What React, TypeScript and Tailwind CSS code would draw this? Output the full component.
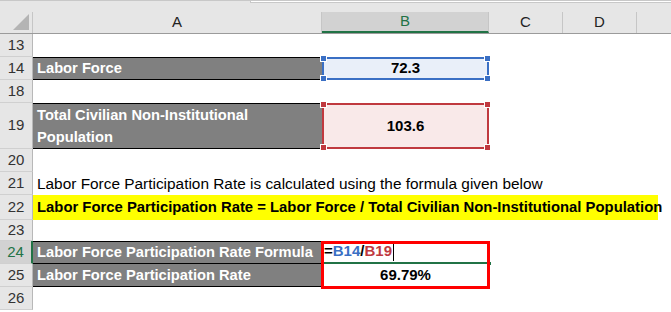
import React from "react";

const rowLabel =
  "w-[33px] shrink-0 flex items-center justify-center bg-[#e6e6e6] border-r border-b border-r-[#b8b8b8] border-b-[#d0d0d0] text-[#333] text-[15px]";

const greyCell =
  "w-[289px] shrink-0 bg-[#808080] text-white font-bold text-[14.7px] pl-[4px] border-y border-black flex items-center";

const Handles = ({ color }: { color: string }) => (
  <>
    <span className={`absolute -left-[4px] -top-[4px] w-[7px] h-[7px] ${color} border border-white`} />
    <span className={`absolute -right-[4px] -top-[4px] w-[7px] h-[7px] ${color} border border-white`} />
    <span className={`absolute -left-[4px] -bottom-[4px] w-[7px] h-[7px] ${color} border border-white`} />
    <span className={`absolute -right-[4px] -bottom-[4px] w-[7px] h-[7px] ${color} border border-white`} />
  </>
);

const Row = ({
  n,
  h,
  active,
  children,
}: {
  n: number;
  h: string;
  active?: boolean;
  children?: React.ReactNode;
}) => (
  <div className={`flex ${h}`}>
    <div
      className={
        active
          ? "w-[33px] shrink-0 flex items-center justify-center bg-[#d2d2d2] border-r-2 border-b border-r-[#217346] border-b-[#d0d0d0] text-[#217346] text-[15px]"
          : rowLabel
      }
    >
      {n}
    </div>
    <div className="flex-1 flex min-w-0">{children}</div>
  </div>
);

export default function App() {
  return (
    <div className="w-[671px] h-[312px] overflow-hidden bg-white font-['Liberation_Sans',Arial,sans-serif] text-black">
      {/* formula bar edge */}
      <div className="h-[12px] flex bg-[#e6e6e6] border-t border-[#c8c8c8]">
        <div className="w-[250px]" />
        <div className="flex-1 h-[2px] bg-white border-l border-b border-[#c8c8c8]" />
      </div>

      {/* column headers */}
      <div className="flex h-[22px] bg-[#e6e6e6] border-b border-[#9b9b9b] text-[15px] text-[#222]">
        <div className="w-[33px] shrink-0 border-r border-[#c6c6c6] flex items-end justify-end pr-[3px] pb-[3px]">
          <svg width="16" height="16" viewBox="0 0 16 16">
            <polygon points="16,0 16,16 0,16" fill="#b4b4b4" />
          </svg>
        </div>
        <div className="w-[289px] shrink-0 border-r border-[#c6c6c6] flex items-center justify-center">A</div>
        <div className="w-[167px] shrink-0 bg-[#d2d2d2] border-r border-[#c6c6c6] border-b-2 border-b-[#217346] flex items-center justify-center text-[#217346]">
          B
        </div>
        <div className="w-[74px] shrink-0 border-r border-[#c6c6c6] flex items-center justify-center">C</div>
        <div className="w-[74px] shrink-0 border-r border-[#c6c6c6] flex items-center justify-center">D</div>
        <div className="flex-1" />
      </div>

      <Row n={13} h="h-[23px]" />

      <Row n={14} h="h-[23px]">
        <div className={greyCell}>Labor Force</div>
        <div className="relative w-[167px] shrink-0 bg-[#e9eff9] border-2 border-[#3a6fc4] flex items-center justify-center font-bold text-[15px]">
          72.3
          <Handles color="bg-[#3a6fc4]" />
        </div>
      </Row>

      <Row n={18} h="h-[23px]" />

      <Row n={19} h="h-[46px]">
        <div className={`${greyCell} leading-[22px]`}>
          Total Civilian Non-Institutional
          <br />
          Population
        </div>
        <div className="relative w-[167px] shrink-0 bg-[#f9e9e9] border-2 border-[#c0393f] flex items-center justify-center font-bold text-[15px]">
          103.6
          <Handles color="bg-[#c0393f]" />
        </div>
      </Row>

      <Row n={20} h="h-[23px]" />

      <Row n={21} h="h-[23px]">
        <div className="pl-[4px] flex items-center text-[15.4px] whitespace-nowrap">
          Labor Force Participation Rate is calculated using the formula given below
        </div>
      </Row>

      <Row n={22} h="h-[25px]">
        <div className="w-[625px] shrink-0 bg-[#ffff00] pl-[4px] flex items-center font-bold text-[14.85px] whitespace-nowrap">
          Labor Force Participation Rate = Labor Force / Total Civilian Non-Institutional Population
        </div>
      </Row>

      <Row n={23} h="h-[21px]" />

      <div className="relative">
        <Row n={24} h="h-[23px]" active>
          <div className={greyCell}>Labor Force Participation Rate Formula</div>
          <div className="relative w-[167px] shrink-0 flex items-center pl-[2px] font-bold text-[15px] border-b-2 border-[#217346]">
            <span>=</span>
            <span className="text-[#3a6fc4]">B14</span>
            <span>/</span>
            <span className="text-[#c0393f]">B19</span>
            <span className="ml-[1px] w-px h-[18px] bg-black" />
            <span className="absolute -right-[3px] -bottom-[4px] w-[5px] h-[5px] bg-[#217346] border border-white" />
          </div>
        </Row>
        <Row n={25} h="h-[23px]">
          <div className={`${greyCell} border-t-0`}>Labor Force Participation Rate</div>
          <div className="w-[167px] shrink-0 flex items-center justify-center font-bold text-[15px]">69.79%</div>
        </Row>
        <div className="absolute left-[321px] top-0 w-[169px] h-[48px] border-[3px] border-[#ff0000] pointer-events-none" />
      </div>

      <Row n={26} h="h-[23px]" />
    </div>
  );
}
